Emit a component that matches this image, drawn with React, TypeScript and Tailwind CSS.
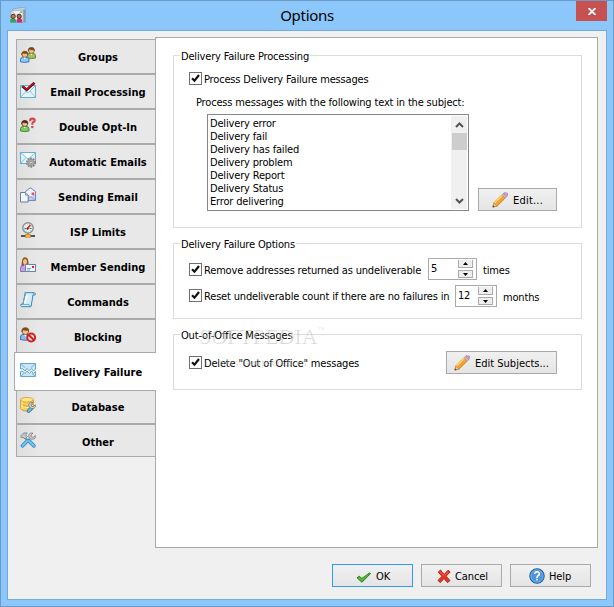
import type { ReactNode } from "react";
import clsx from "clsx";

/* ---------- 16px icons ---------- */

function Icon({ children, size = 16, className }: { children: ReactNode; size?: number; className?: string }) {
  return (
    <svg width={size} height={size} viewBox="0 0 16 16" fill="none" className={clsx("shrink-0", className)}>
      {children}
    </svg>
  );
}

function Person({ x = 0, y = 0, shirt, dark, hair = "#7a4a1c" }: { x?: number; y?: number; shirt: string; dark: string; hair?: string }) {
  return (
    <g transform={`translate(${x} ${y})`}>
      <path d="M.5 11V8.6Q.6 6.8 2.6 6.5H6.8Q8.9 6.8 9 8.6V11Q4.7 12.2.5 11Z" fill={shirt} stroke={dark} strokeWidth=".9" />
      <path d="M3.5 6.3 4.7 8.6 6 6.3Z" fill="#fff" />
      <circle cx="4.8" cy="3.6" r="2.9" fill="#f0c08a" stroke={hair} strokeWidth=".7" />
      <path d="M1.7 4.2Q1.2.4 4.8.4T7.8 4L7 2.8Q4.6 3.2 2.8 2.3Z" fill={hair} stroke={hair} strokeWidth=".5" />
    </g>
  );
}

function Envelope({ x = 0, y = 0, w = 15, h = 12 }: { x?: number; y?: number; w?: number; h?: number }) {
  const mx = x + w / 2;
  return (
    <g stroke="#6aaed6">
      <rect x={x + 0.5} y={y + 0.5} width={w} height={h} fill="#e3f3fc" />
      <path d={`M${x + 1} ${y + h}L${mx - 1.5} ${y + h / 2}M${x + w} ${y + h}L${mx + 2.5} ${y + h / 2}`} strokeWidth=".7" />
      <path d={`M${x + 1} ${y + 1}L${mx + 0.5} ${y + h * 0.65}L${x + w} ${y + 1}`} fill="#f8fdff" strokeWidth=".8" />
    </g>
  );
}

const GroupsIcon = () => (
  <Icon>
    <Person x={6.6} y={0} shirt="#9fc257" dark="#58832b" />
    <Person x={0} y={3.8} shirt="#8ec5fb" dark="#2f6dbd" />
  </Icon>
);

const EmailProcessingIcon = () => (
  <Icon>
    <Envelope y={3} />
    <path d="M2.3 4.2 6.8 7.8 14.5.8" stroke="#7d0e13" strokeWidth="2.7" />
    <path d="M3 4.4 6.8 7 14 1.2" stroke="#c01a20" strokeWidth="1" />
  </Icon>
);

const DoubleOptInIcon = () => (
  <Icon>
    <Person x={0} y={3} shirt="#83c765" dark="#318838" hair="#4d2a13" />
    <path d="M10.2 4.2V3.2Q10.2 1.7 12.5 1.7T14.7 3.5Q14.7 4.8 12.8 5.6Q12.3 6 12.3 7.8" stroke="#d8454d" strokeWidth="2.2" />
    <rect x="11.2" y="9" width="2.2" height="2.1" fill="#d8454d" />
  </Icon>
);

const AutomaticEmailsIcon = () => (
  <Icon>
    <Envelope w={15} h={11} />
    <circle cx="11" cy="10.6" r="4.2" fill="#b9b9b9" stroke="#858585" strokeWidth="1.7" strokeDasharray="1.75 .9" />
    <circle cx="11" cy="10.6" r="3.1" fill="#b4b7b9" stroke="#8b8b8b" strokeWidth=".8" />
    <circle cx="11" cy="10.6" r="1.3" fill="#f1f1f1" stroke="#777" strokeWidth=".8" />
  </Icon>
);

const SendingEmailIcon = () => (
  <Icon>
    <path d="M5.5 13.5V4.5L10.3.7 15.5 4.5V13.5Z" fill="#b9cbea" stroke="#7787b8" />
    <path d="M6 5 10.5 1.5 15 5V9L10.5 11.4 6 9Z" fill="#edf4ff" />
    <path d="M6 13 10.5 9.5 15 13M6 7.5 10.5 10.5 15 7.5" stroke="#8ca0cd" strokeWidth=".8" />
    <rect x="11.6" y="5.6" width="2.5" height="2.2" fill="#ee4037" />
    <path d="M.5 5.5H5.5L8.2 8.2V15H.5Z" fill="#f3f8ff" stroke="#6979a8" />
    <path d="M5.5 5.5V8.2H8.2" fill="#c7d7f2" stroke="#7585b1" strokeWidth=".8" />
  </Icon>
);

const IspLimitsIcon = () => (
  <Icon>
    <circle cx="8" cy="5.9" r="5.2" fill="#f4f4f4" stroke="#8d8d8d" strokeWidth="1.4" />
    <circle cx="8" cy="5.9" r="3.6" stroke="#aaa" strokeWidth=".8" strokeDasharray="1 1.2" />
    <path d="M7 7 10.5 3" stroke="#d8232a" strokeWidth="1.6" />
    <path d="M4.5 6.5H6.5M9.5 6.5H11.5" stroke="#248f45" strokeWidth="1.2" />
    <circle cx="7.6" cy="6.7" r="1" fill="#333" />
    <rect x="7" y="11" width="2" height="2" fill="#8b8b8b" />
    <rect x="1" y="13" width="14" height="2" fill="#555" />
    <rect x="5.5" y="12.5" width="5" height="2.8" fill="#f4b63a" stroke="#b97917" strokeWidth=".5" />
  </Icon>
);

const MemberSendingIcon = () => (
  <Icon>
    <path d="M1.8 10Q1 8 2 4Q2.3.3 5.1.3T8.3 4Q9.3 8 8 10Z" fill="#915b28" />
    <path d="M.4 14.5V11.3Q.6 8.6 3 8.4H7Q8.6 8.8 8.6 11V14.5Z" fill="#c79de0" stroke="#8757a9" strokeWidth=".8" />
    <ellipse cx="5" cy="4.7" rx="2" ry="2.7" fill="#f1c392" />
    <path d="M3.8 7.5 5 10 6.4 7.5Z" fill="#f5cfaa" />
    <rect x="5.5" y="7.5" width="10" height="7" fill="#eff7ff" stroke="#6785b5" />
    <path d="M7 11.5H11M7 13H10" stroke="#91a7c5" />
    <rect x="12" y="9" width="2" height="2" fill="#f0211b" />
  </Icon>
);

const CommandsIcon = () => (
  <Icon>
    <path d="M5 .7H14.5Q16 1.5 15 3H13L11 14.7H1.7Q.1 14.1 1 12.2H3L5 2Z" fill="#d7effc" stroke="#3686b5" />
    <path d="M4.8 1.4Q5.9 3 4.2 6L2.9 12.4H9Q9 14 11 14.5M13 3Q12.5 1.3 14.4 1" stroke="#5ba3c9" strokeWidth=".9" />
    <path d="M7 3 5 11.5" stroke="#fff" strokeWidth="1.8" />
  </Icon>
);

const BlockingIcon = () => (
  <Icon>
    <g transform="scale(1.12)"><Person x={0} y={.2} shirt="#8bbcee" dark="#3f73b5" /></g>
    <circle cx="11.2" cy="10.5" r="3.9" fill="#fce8e3" stroke="#d42020" strokeWidth="2" />
    <path d="M8.5 7.8 14 13.2" stroke="#d42020" strokeWidth="2" />
  </Icon>
);

const DeliveryFailureIcon = () => (
  <Icon>
    <g transform="translate(0 1)">
      <path d="M.5 6V.5H15.5V6L13.5 8 11.5 5.5 9.5 8 7 5.5 5 8 2.5 5.7Z" fill="#c9e5f6" stroke="#62a6d2" />
      <path d="M.5 8.5 2.5 8 5 10.5 7 8 9.5 10.5 11.5 8 13.5 10.5 15.5 8.5V13.5H.5Z" fill="#c9e5f6" stroke="#62a6d2" />
      <path d="M1 1 5 4.5M15 1 11 4.5M1 13 4 10.5M15 13 12 10.5" stroke="#73b0d8" strokeWidth=".9" />
    </g>
  </Icon>
);

const Wrench = () => <path d="M15.3 5.3 13.2 7.2 11.2 6.7 11 4.8 13 3Q10.5 2 9 4.2 8.4 5.8 9 7.1L11.2 9Q14.2 9.5 15.4 7.5Z" fill="#d3d7d9" stroke="#777" strokeWidth=".8" />;

const DatabaseIcon = () => (
  <Icon>
    <path d="M.6 2.8V11.7Q2 14.2 7 14.2T13.4 11.7V2.8Z" fill="#f9cf5c" stroke="#d0952e" strokeWidth=".9" />
    <path d="M1.2 7.3Q3 9.3 7 9.3T12.8 7.3" stroke="#cf9429" />
    <path d="M1.2 8.4Q3 10.4 7 10.4T12.8 8.4" stroke="#fff0a3" />
    <path d="M2 4V12" stroke="#ffe88b" strokeWidth="1.3" />
    <ellipse cx="7" cy="2.7" rx="6.4" ry="2.3" fill="#ffe48b" stroke="#d59a28" strokeWidth=".8" />
    <path d="M11.3 11.2 8.6 14" stroke="#236ba4" strokeWidth="3.6" strokeLinecap="round" />
    <path d="M11.3 11.2 8.6 14" stroke="#66bfed" strokeWidth="2.2" strokeLinecap="round" />
    <g transform="translate(0 2.5)"><Wrench /></g>
  </Icon>
);

const OtherIcon = () => (
  <Icon>
    <path d="M3 4 11 12" stroke="#8e969b" strokeWidth="1.8" />
    <path d="M.5 4.2 3.7.9H7.2L5.7 2.9 7.4 4.7 5 7 3 5.2 1.5 6Z" fill="#bfc5c8" stroke="#7c8387" strokeWidth=".8" />
    <g transform="translate(0 -1.8)"><Wrench /></g>
    <path d="M10.2 6 8 8.2" stroke="#a2a8ab" strokeWidth="2" />
    <path d="M7.5 8.8 2.6 13.7M9.5 9.3 13.8 13.8" stroke="#2f83bd" strokeWidth="3.7" strokeLinecap="round" />
    <path d="M7.5 8.8 2.6 13.7M9.5 9.3 13.8 13.8" stroke="#6bc6f1" strokeWidth="2.3" strokeLinecap="round" />
  </Icon>
);

const AppIcon = () => (
  <Icon>
    <path d="M3 2 12.5.4 15.6 1.2V15H3Z" fill="#c9d6e2" stroke="#8ea0b0" strokeWidth=".8" />
    <path d="M1 4 13 3V15H1Z" fill="#eef3f7" stroke="#9aabba" strokeWidth=".8" />
    <path d="M13.4 2.5H15.4V15.2H13.4Z" fill="#8398ac" />
    <path d="M1 4.2 7 8.2 13 3.2" stroke="#a8b8c6" strokeWidth=".8" />
    <rect x="10.2" y="4.2" width="2" height="2" fill="#7fc492" />
    <path d="M.2 15.6V13Q.4 11.2 3 11.2T6.2 13V15.6Z" fill="#2fa463" />
    <path d="M6.6 15.6V13Q6.8 11 9.2 11T12.2 13V15.6Z" fill="#c62a72" />
    <circle cx="3.2" cy="9.4" r="2.1" fill="#c07a40" stroke="#5d321b" />
    <circle cx="9.2" cy="9.4" r="2.1" fill="#b96a40" stroke="#59291f" />
  </Icon>
);

const PencilIcon = () => (
  <Icon>
    <path d="M1 15 1.7 11 10.2 2.5 13.7 5.6 5 14.2Z" fill="#f4a32e" stroke="#b77217" strokeWidth=".7" />
    <path d="M2.5 11 10.5 3.3" stroke="#ffd768" strokeWidth="1.5" />
    <path d="M1 15 1.7 11.2 4.8 14Z" fill="#efd6a4" stroke="#a98248" strokeWidth=".5" />
    <path d="M.6 15.4 1 13.3 2.8 14.8Z" fill="#494949" />
    <path d="M10 2.7 11.5 1.2 15 4.4 13.5 6Z" fill="#bfc4c9" stroke="#8b8f95" strokeWidth=".5" />
    <path d="M11.4 1.4 12.5.5 15.6 1.2 15.4 3.8 14.8 4.6Z" fill="#d69bcf" stroke="#a876a4" strokeWidth=".6" />
  </Icon>
);

const OkIcon = () => (
  <Icon>
    <path d="M1 9.8 3.2 8.2 5.8 10.5 13.4 5 14.5 5.6 6 14.3Z" fill="#43ae2e" stroke="#207716" strokeWidth=".9" />
    <path d="M2.5 9.8 5.8 12.2 11.5 7" stroke="#72d552" strokeWidth=".7" />
  </Icon>
);

const CancelIcon = () => (
  <Icon>
    <path d="M2.3 4.1 4.6 2Q6.5 5.6 8.3 6.3L12 2.3 14.1 4.1 10 8.2 14 12.6 11.4 14.5 8 10.4 4.4 14.5 2 12.5 6 8.3Z" fill="#ee3520" stroke="#b51f17" />
    <path d="M4 3.7 7.8 7.8M12 4 9 7.3" stroke="#ff7a58" strokeWidth=".7" />
  </Icon>
);

const HelpIcon = () => (
  <Icon>
    <circle cx="8" cy="8" r="7.2" fill="#4389ce" stroke="#2060a7" strokeWidth="1.1" />
    <circle cx="8" cy="8" r="6.1" fill="#4c96db" stroke="#87bcec" strokeWidth=".7" />
    <path d="M5.7 6V5.5Q6 3.9 8.1 3.9T10.4 5.9Q10.4 7 9 7.8 8 8.4 8 10" stroke="#fff" strokeWidth="1.6" />
    <rect x="7.2" y="10.8" width="1.7" height="1.5" fill="#fff" />
  </Icon>
);

/* ---------- controls ---------- */

function Checkbox({ label, className }: { label: string; className?: string }) {
  return (
    <label className="flex items-start h-[13px]">
      <span className="w-[13px] h-[13px] shrink-0 border border-[#707070] bg-white">
        <svg width="11" height="11" viewBox="0 0 11 11" fill="none">
          <path d="M2 5.2 4.5 7.7 9 2" stroke="#111" strokeWidth="2.2" />
        </svg>
      </span>
      <span className={clsx("ml-[2px] mt-px", className)}>{label}</span>
    </label>
  );
}

function Spinner({ value, className }: { value: string; className: string }) {
  return (
    <div className={clsx("h-[22px] border border-[#aaa] bg-white flex justify-between", className)}>
      <span className="pl-[2px] h-[18px] leading-[19px] tracking-[-0.2px]">{value}</span>
      <span className="flex flex-col gap-[2px] w-[15px] mr-[3px] mt-px">
        <span className="h-[8px] border border-t-0 border-[#aaa] bg-[#eee] flex justify-center items-center">
          <svg width="5" height="3" viewBox="0 0 5 3"><path d="M0 3 2.5 0 5 3Z" fill="#000" /></svg>
        </span>
        <span className="h-[8px] border border-[#aaa] bg-[#eee] flex justify-center items-center">
          <svg width="5" height="3" viewBox="0 0 5 3"><path d="M0 0 2.5 3 5 0Z" fill="#000" /></svg>
        </span>
      </span>
    </div>
  );
}

function Button({ icon, label, className }: { icon: ReactNode; label: string; className: string }) {
  return (
    <button className={clsx("h-[23px] border bg-linear-to-b from-[#f0f0f0] to-[#e5e5e5] flex items-center", className)}>
      {icon}
      <span className="mt-px">{label}</span>
    </button>
  );
}

function Group({ title, className, children }: { title: string; className: string; children: ReactNode }) {
  return (
    <section className={clsx("w-[409px] ml-[17px] border border-[#dcdcdc]", className)}>
      <h2 className="-mt-[7px] ml-[6px] px-px h-[13px] leading-[15px] w-fit bg-white">{title}</h2>
      {children}
    </section>
  );
}

const tabs = [
  { label: "Groups", icon: GroupsIcon },
  { label: "Email Processing", icon: EmailProcessingIcon },
  { label: "Double Opt-In", icon: DoubleOptInIcon },
  { label: "Automatic Emails", icon: AutomaticEmailsIcon },
  { label: "Sending Email", icon: SendingEmailIcon },
  { label: "ISP Limits", icon: IspLimitsIcon },
  { label: "Member Sending", icon: MemberSendingIcon },
  { label: "Commands", icon: CommandsIcon },
  { label: "Blocking", icon: BlockingIcon },
  { label: "Delivery Failure", icon: DeliveryFailureIcon },
  { label: "Database", icon: DatabaseIcon },
  { label: "Other", icon: OtherIcon },
];

const subjects = [
  "Delivery error",
  "Delivery fail",
  "Delivery has failed",
  "Delivery problem",
  "Delivery Report",
  "Delivery Status",
  "Error delivering",
];

function Sidebar() {
  return (
    <nav className="w-[141px] pt-[2px] shrink-0 relative z-10">
      {tabs.map(({ label, icon: TabIcon }) => {
        const active = label === "Delivery Failure";
        return (
          <div
            key={label}
            className={clsx(
              "flex items-start border border-[#aaa] font-bold tracking-[0.03px]",
              active
                ? "h-[39px] -my-[2px] w-[142px] pl-[5px] pt-[9px] bg-white border-r-0 relative z-10"
                : "ml-[2px] w-[140px] pl-[3px] pt-[7px] bg-linear-to-r from-[#dedede] via-[#e8e8e8] via-15% to-[#e8e8e8]",
              !active && (label === "Other" ? "h-[33px]" : "h-[35px]")
            )}
          >
            <TabIcon />
            <span className={clsx("flex-1 text-center pl-[5px] pt-[4px]", active && "pr-px")}>{label}</span>
          </div>
        );
      })}
    </nav>
  );
}

function SubjectList() {
  return (
    <div className="w-[262px] h-[97px] border border-[#828790] bg-white flex justify-between p-px">
      <ul className="pl-px pt-px">
        {subjects.map((s) => (
          <li key={s} className="h-[13px] leading-[13px]">{s}</li>
        ))}
      </ul>
      <div className="w-[16px] bg-[#f0f0f0] flex flex-col items-center">
        <svg width="15" height="17" viewBox="0 0 15 17" fill="none"><path d="M4 11 7.5 7.5 11 11" stroke="#555" strokeWidth="2" /></svg>
        <div className="w-[15px] h-[17px] bg-[#cdcdcd]" />
        <svg width="15" height="17" viewBox="0 0 15 17" fill="none" className="mt-auto"><path d="M4 7 7.5 10.5 11 7" stroke="#555" strokeWidth="2" /></svg>
      </div>
    </div>
  );
}

export default function App() {
  return (
    <div className="w-[614px] h-[607px] bg-[#8cc7fb] border border-[#6b9bc5] font-['DejaVu_Sans_Condensed','DejaVu_Sans',sans-serif] [font-stretch:condensed] text-[11px] leading-[13px] text-black whitespace-nowrap overflow-hidden">
      {/* Title bar */}
      <header className="h-[29px] flex">
        <div className="pl-[9px] pt-[6px] w-[55px]"><AppIcon /></div>
        <h1 className="flex-1 text-center font-['Noto_Sans','Open_Sans',sans-serif] [font-stretch:normal] text-[15px] tracking-[-0.3px] leading-[29px]">Options</h1>
        <button className="w-[31px] h-[20px] mr-[6px] ml-[18px] bg-[#c75050] flex items-center justify-center">
          <svg width="8" height="7" viewBox="0 0 8 7" fill="none"><path d="M.5 0 7.5 7M7.5 0 .5 7" stroke="#fff" strokeWidth="1.8" /></svg>
        </button>
      </header>

      <main className="ml-[6px] w-[600px] h-[570px] border border-[#76aada] bg-[#f0f0f0] pt-[6px] pl-[6px]">
        <div className="flex">
          <Sidebar />
          <div className="w-[443px] h-[511px] border border-[#aaa] bg-white pt-[17px] tracking-[-0.17px]">
            <Group title="Delivery Failure Processing" className="h-[173px]">
              <div className="pl-[15px] pt-[10px]">
                <Checkbox label="Process Delivery Failure messages" />
                <p className="ml-[7px] mt-[11px] mb-[5px]">Process messages with the following text in the subject:</p>
                <div className="flex items-end ml-[18px]">
                  <SubjectList />
                  <Button
                    icon={<PencilIcon />}
                    label="Edit..."
                    className="w-[79px] ml-[9px] pl-[13px] gap-[5px] border-[#aaa] tracking-[0.2px]"
                  />
                </div>
              </div>
            </Group>

            <Group title="Delivery Failure Options" className="h-[76px] mt-[15px]">
              <div className="pl-[15px] pt-[8px] flex flex-col gap-[5px]">
                <div className="flex items-start h-[22px]">
                  <div className="pt-[5px]">
                    <Checkbox label="Remove addresses returned as undeliverable" className="w-[224px]" />
                  </div>
                  <Spinner value="5" className="w-[49px]" />
                  <span className="ml-[6px] pt-[6px]">times</span>
                </div>
                <div className="flex items-start h-[22px]">
                  <div className="pt-[4px]">
                    <Checkbox label="Reset undeliverable count if there are no failures in" className="w-[251px]" />
                  </div>
                  <Spinner value="12" className="w-[42px]" />
                  <span className="ml-[6px] pt-[6px]">months</span>
                </div>
              </div>
            </Group>

            <Group title="Out-of-Office Messages" className="h-[56px] mt-[15px] relative">
              <div className="pl-[15px] pr-[24px] pt-[10px] flex justify-between items-center">
                <Checkbox label={'Delete "Out of Office" messages'} />
                <Button
                  icon={<PencilIcon />}
                  label="Edit Subjects..."
                  className="w-[111px] pl-[7px] gap-[5px] border-[#aaa] tracking-normal"
                />
              </div>
              {/* Watermark */}
              <div className="absolute left-[24px] -top-[10px] pointer-events-none tracking-normal font-['Liberation_Serif',serif] text-white/40 [text-shadow:1px_1px_0_rgba(0,0,0,0.16)]">
                <div className="text-[22px] leading-[22px] flex">SOFTPEDIA<sup className="text-[7px] leading-[8px] top-0">™</sup></div>
                <div className="ml-[20px] mt-[8px] text-[11px] leading-[12px]">www.softpedia.com</div>
              </div>
            </Group>
          </div>
        </div>

        <footer className="flex gap-[8px] mt-[16px] ml-[318px]">
          <Button icon={<OkIcon />} label="OK" className="w-[81px] pl-[23px] gap-[4px] border-[#3399ff]" />
          <Button icon={<CancelIcon />} label="Cancel" className="w-[81px] pl-[14px] gap-[3px] border-[#aaa] tracking-[-0.1px]" />
          <Button icon={<HelpIcon />} label="Help" className="w-[81px] pl-[18px] gap-[4px] border-[#aaa] tracking-[-0.1px]" />
        </footer>
      </main>
    </div>
  );
}
